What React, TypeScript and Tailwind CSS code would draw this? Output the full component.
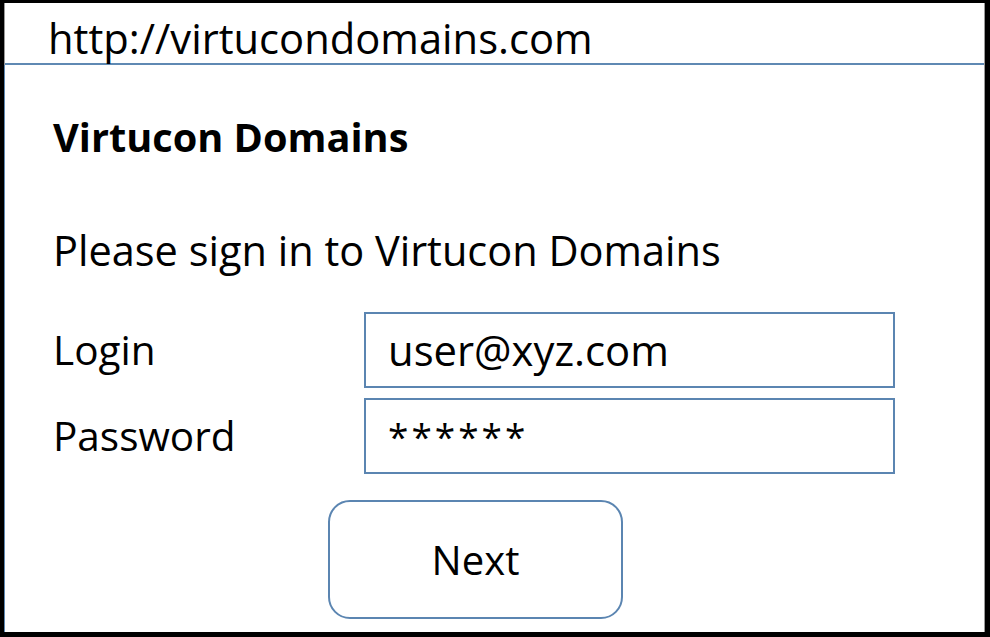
import React from "react";

export default function App() {
  return (
    <div className="w-[990px] h-[637px] bg-black pt-[3px] pr-[5px] pb-[5px] pl-[4px]" style={{ fontFamily: "'Open Sans', Lato, sans-serif" }}>
      <div className="w-full h-full bg-white flex flex-col text-black border-l border-r border-[#9a9a9a]">
        <div className="h-[62px] border-b-2 border-[#5f89b3] pl-[43px] pt-[14px] shrink-0">
          <div className="text-[41.7px] leading-none">http://virtucondomains.com</div>
        </div>
        <div className="flex-1 pl-[48px] pt-[53px] border-l border-[#5f89b3] -ml-px">
          <div className="text-[39.7px] leading-none font-bold">Virtucon Domains</div>
          <div className="text-[41.5px] leading-none mt-[72px]">Please sign in to Virtucon Domains</div>
          <div className="mt-[41px] flex flex-col gap-[10px]">
            <div className="flex items-center h-[76px]">
              <div className="w-[311px] text-[40.5px] leading-none">Login</div>
              <div className="w-[531px] h-[76px] border-2 border-[#5b85b1] flex items-center pl-[22px] text-[41.8px] leading-none">user@xyz.com</div>
            </div>
            <div className="flex items-center h-[76px]">
              <div className="w-[311px] text-[40.5px] leading-none">Password</div>
              <div className="w-[531px] h-[76px] border-2 border-[#5b85b1] flex items-center pl-[22px] pb-[2px] text-[37px] tracking-[3px] leading-none">******</div>
            </div>
          </div>
          <div className="mt-[26px] ml-[275px] w-[295px] h-[119px] border-2 border-[#5b85b1] rounded-[22px] flex items-center justify-center text-[40px] leading-none">
            Next
          </div>
        </div>
      </div>
    </div>
  );
}
